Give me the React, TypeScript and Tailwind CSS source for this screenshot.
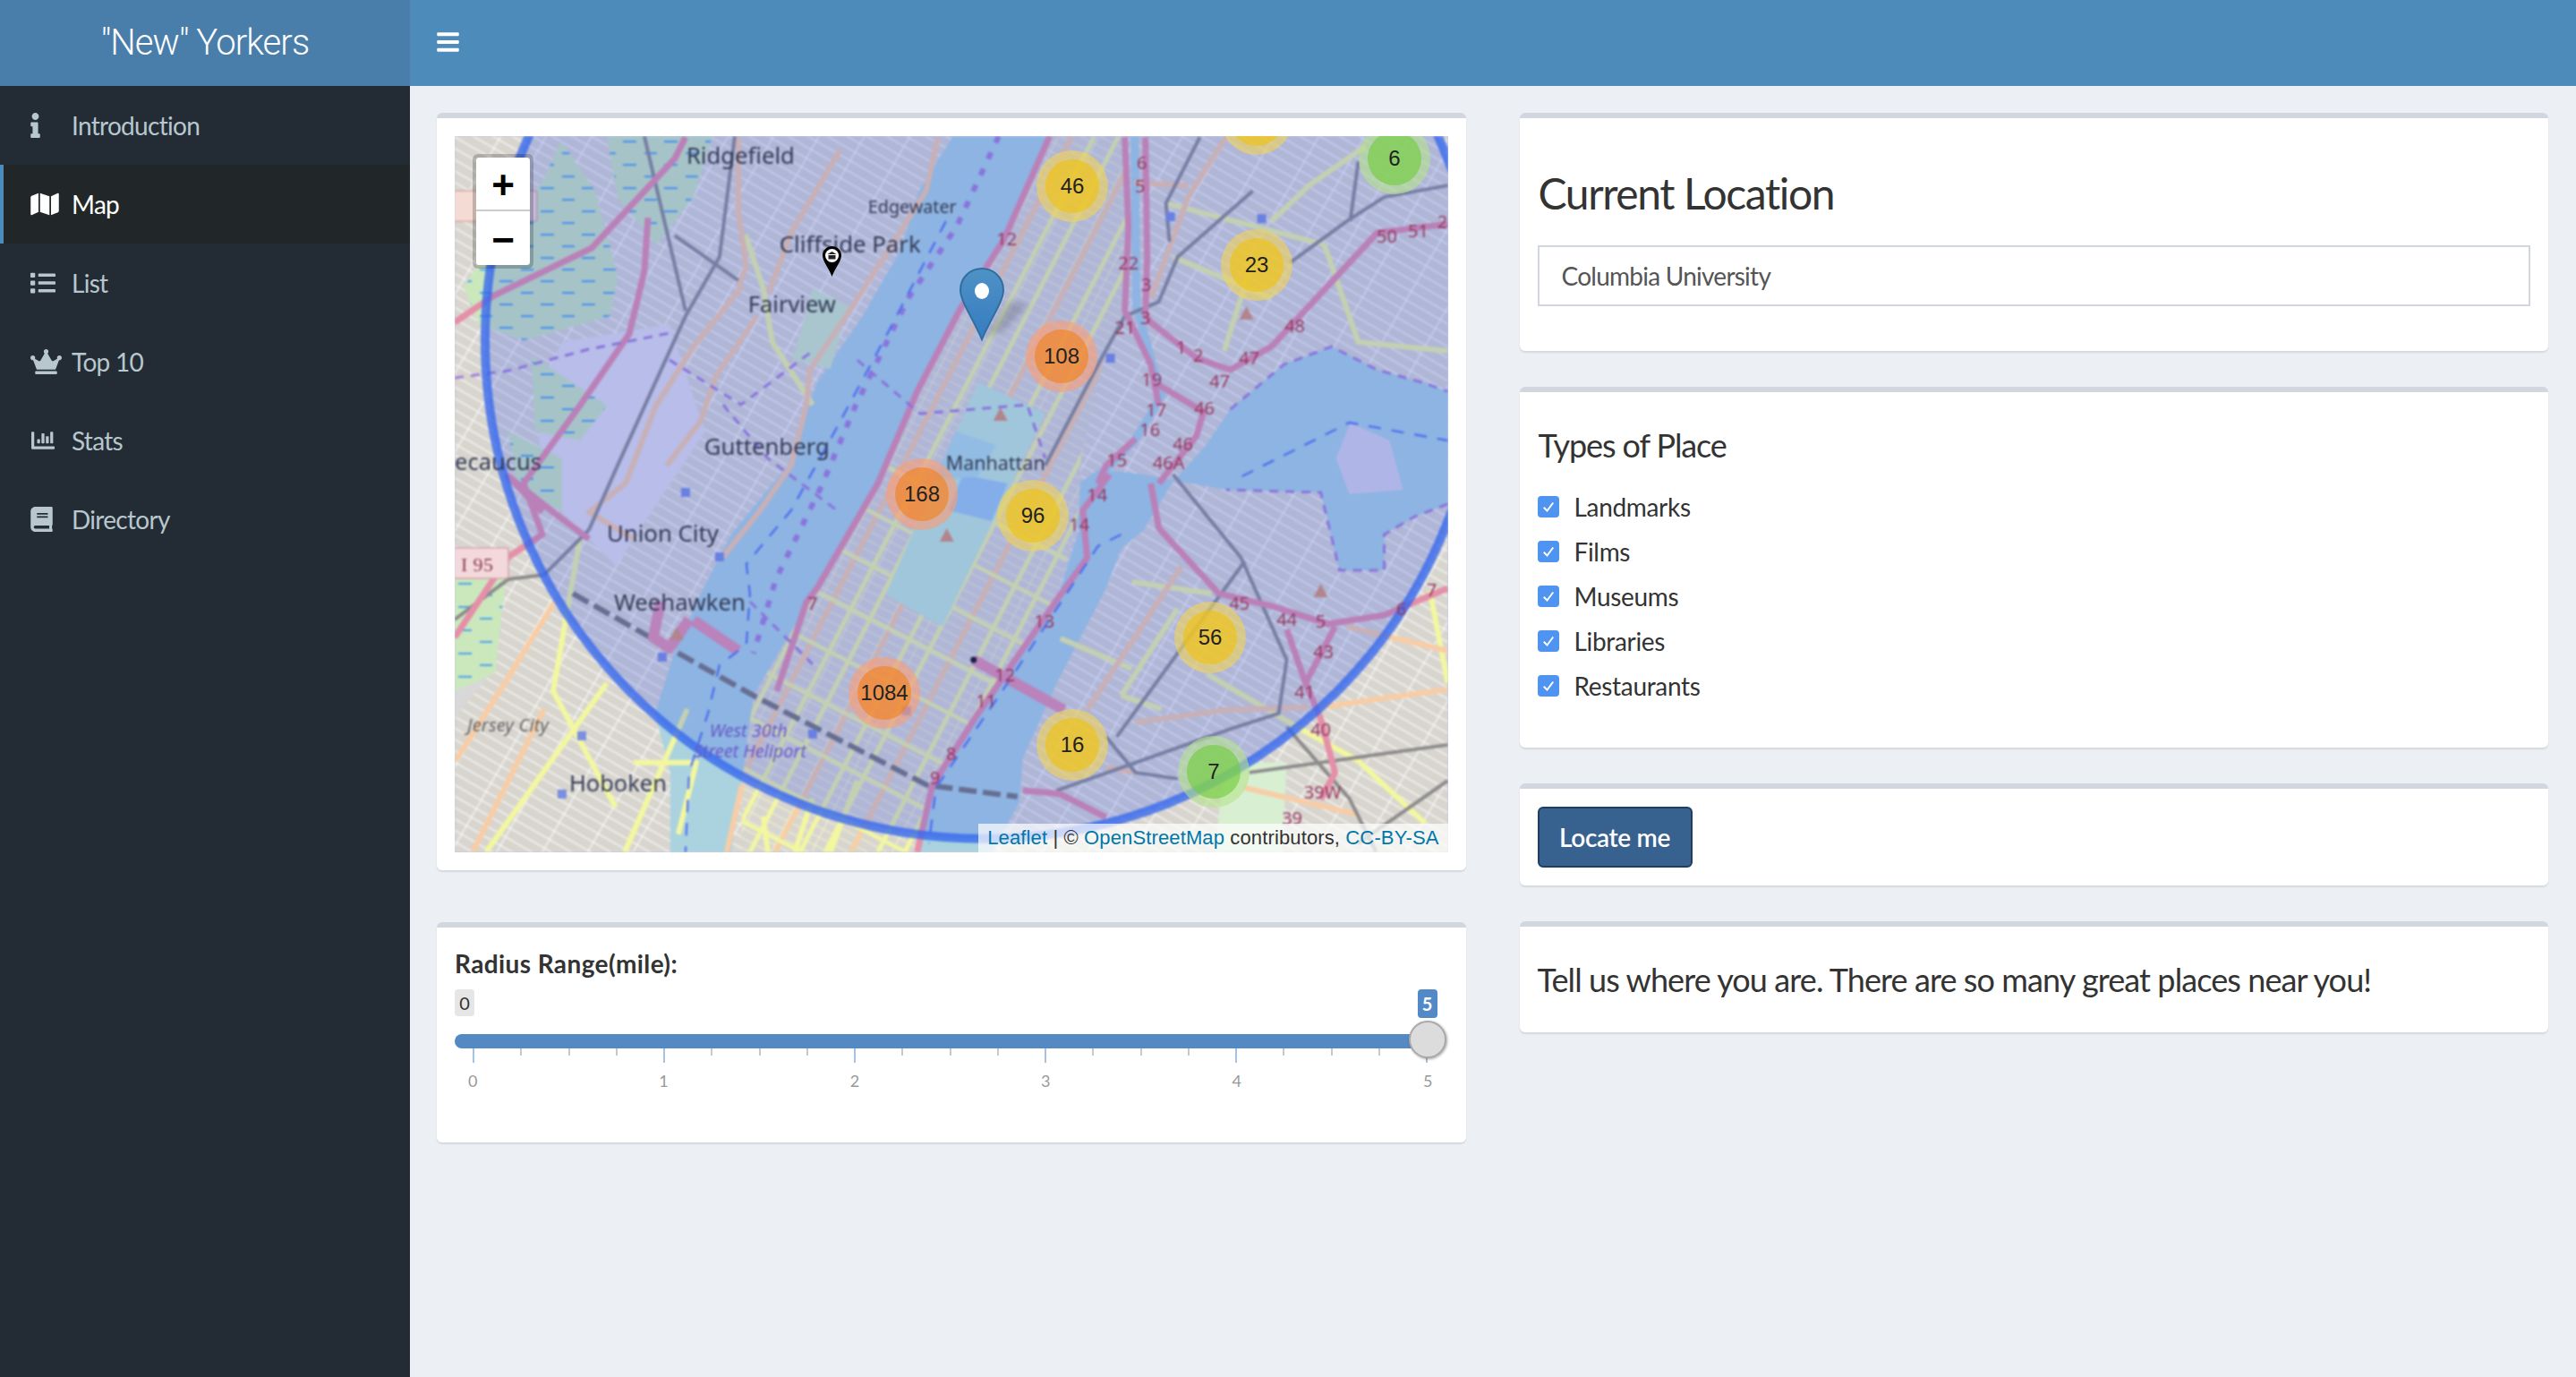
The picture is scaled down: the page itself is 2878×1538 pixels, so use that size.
import React from 'react';
import { FaInfo, FaMap, FaList, FaCrown, FaChartBar, FaBook, FaBars } from 'react-icons/fa';

const nav = [
  { label: 'Introduction', icon: <FaInfo className="w-[11px] h-[28px]" />, text: 'text-[#b8c7ce]' },
  { label: 'Map', icon: <FaMap className="w-[32px] h-[28px]" />, active: true },
  { label: 'List', icon: <FaList className="w-[28px] h-[28px]" /> },
  { label: 'Top 10', icon: <FaCrown className="w-[35px] h-[30px]" /> },
  { label: 'Stats', icon: <FaChartBar className="w-[28px] h-[26px]" /> },
  { label: 'Directory', icon: <FaBook className="w-[25px] h-[28px]" /> },
];

const places = ['Landmarks', 'Films', 'Museums', 'Libraries', 'Restaurants'];

const clusters = [
  { n: '', pos: 'left-[856px] top-[-59px]', outer: 'bg-[#f1d357]/60', inner: 'bg-[#f0c20c]/60' },
  { n: '46', pos: 'left-[650px] top-[16px]', outer: 'bg-[#f1d357]/60', inner: 'bg-[#f0c20c]/60' },
  { n: '6', pos: 'left-[1010px] top-[-15px]', outer: 'bg-[#b5e28c]/60', inner: 'bg-[#6ecc39]/60' },
  { n: '23', pos: 'left-[856px] top-[104px]', outer: 'bg-[#f1d357]/60', inner: 'bg-[#f0c20c]/60' },
  { n: '108', pos: 'left-[638px] top-[206px]', outer: 'bg-[#fd9c73]/60', inner: 'bg-[#f18017]/60' },
  { n: '168', pos: 'left-[482px] top-[360px]', outer: 'bg-[#fd9c73]/60', inner: 'bg-[#f18017]/60' },
  { n: '96', pos: 'left-[606px] top-[384px]', outer: 'bg-[#f1d357]/60', inner: 'bg-[#f0c20c]/60' },
  { n: '56', pos: 'left-[804px] top-[520px]', outer: 'bg-[#f1d357]/60', inner: 'bg-[#f0c20c]/60' },
  { n: '1084', pos: 'left-[440px] top-[582px]', outer: 'bg-[#fd9c73]/60', inner: 'bg-[#f18017]/60' },
  { n: '16', pos: 'left-[650px] top-[640px]', outer: 'bg-[#f1d357]/60', inner: 'bg-[#f0c20c]/60' },
  { n: '7', pos: 'left-[808px] top-[670px]', outer: 'bg-[#b5e28c]/60', inner: 'bg-[#6ecc39]/60' },
];

const motorways = [
  '258,1 246,25 153,125 44,178 0,208',
  '216,91 212,151 195,221 140,301 77,388 98,445 60,470 0,560',
  '665,0 614,115 564,195 517,285 473,388 405,505 393,521 360,620',
  '749,1 753,101 749,195 778,255 787,301',
  '772,1 774,135 772,200 778,208 829,248 867,261 913,235 1031,108 1110,98',
  '787,278 837,308 829,335 787,388',
  '761,338 728,368 719,388',
  '732,378 702,418 707,471 673,518 585,645 534,725 517,800',
  '778,388 787,438 854,511 913,525 976,545 1039,535 1110,505',
  '930,551 951,611 984,548',
  '951,611 968,651 984,711 968,741',
  '635,731 677,735 728,761',
  '98,420 60,380 110,420 150,450',
];
const thickMotorways = ['267,541 317,575', '580,585 681,641', '230,520 222,560 240,572 262,540'];
const rails = [
  '212,0 258,195', '313,0 296,135 258,201 182,368 150,440', '246,111 317,161',
  '883,475 740,671', '803,378 879,471 930,585 921,645 871,661 673,731',
  '1110,680 888,711', '728,671 761,711 808,718', '1110,55 1039,68 997,95 934,141', '1010,28 1001,95',
  '892,61 808,135 787,185 749,201 723,248 660,368', '833,1 795,75 799,118',
  '0,540 60,495 100,490 150,440', '930,660 1000,740 1030,800', '1110,720 1010,790',
];
const railsDashed = ['132,511 334,625 528,725 629,738'];
const primaries = [
  '321,168 267,235 225,301 191,388 150,420 200,450', '431,15 376,108 351,175', '317,1 317,85 326,145 317,168',
  '540,1 527,61 448,185 397,261 393,301 376,368 340,420 300,470', '338,201 292,268 275,318 237,368',
  '812,481 707,641', '761,655 862,641 955,638', '728,705 761,711', '862,1 820,68 778,181',
  '1110,575 997,548', '1110,618 968,638', '883,728 1010,758', '111,521 56,611 1,698', '321,725 304,800',
  '100,640 60,720 20,800', '760,52 820,55',
];
const secondaries = [
  '795,75 972,121', '913,95 955,55 1018,11', '803,135 913,181', '757,498 846,511', '677,561 757,595',
  '745,625 808,528', '841,601 938,658 1010,698 1085,768', '1090,508 1110,611', '170,611 35,800', '260,640 190,800',
  '140,450 110,620 180,750', '345,760 350,800', '400,740 380,800', '450,720 420,800', '325,110 345,170 355,230 400,300',
  '890,145 860,240', '972,121 1010,230 1110,240', '200,700 270,700 250,780', '790,640 745,625',
];
const borders = [
  '608,0 561,101 507,181 448,301 410,391 359,495 334,578',
  '867,305 927,255 980,235 1031,261 1081,275 1110,285',
  '1110,411 1073,425 1039,445 1039,485 989,485 968,398 862,395',
  '0,270 60,262 150,238 240,220',
  '300,300 350,360 430,420',
  '330,520 400,590', '240,250 320,300 400,240',
  '450,250 520,310 640,300 660,360',
];
const ships = [
  '549,95 485,218 422,335 376,418 326,478 330,511 326,568 296,591 283,645 262,711 258,800',
  '745,445 719,458 618,611 538,728 530,790',
  '880,380 1000,320 1110,340',
];
const exits: [string, number, number][] = [
  ['12', 617, 114], ['6', 768, 29], ['5', 766, 55], ['22', 753, 141], ['3', 773, 165], ['3', 772, 202], ['21', 749, 213],
  ['1', 812, 235], ['2', 831, 244], ['47', 888, 247], ['47', 855, 273], ['48', 939, 211], ['19', 779, 271], ['17', 784, 305],
  ['16', 777, 327], ['46', 838, 303], ['46', 814, 343], ['46A', 798, 364], ['15', 740, 361], ['50', 1042, 111], ['51', 1077, 105],
  ['2', 1104, 95], ['14', 718, 400], ['14', 698, 433], ['13', 659, 541], ['45', 877, 521], ['44', 930, 539], ['5', 968, 541],
  ['43', 971, 575], ['41', 950, 620], ['40', 968, 662], ['39W', 970, 732], ['39', 936, 761], ['7', 1092, 506], ['6', 1058, 527],
  ['12', 615, 601], ['11', 594, 630], ['8', 555, 689], ['9', 537, 716], ['7', 400, 521],
];
const towns: [string, number, number, number, number][] = [
  ['Ridgefield', 259, 31, 121, 26], ['Edgewater', 462, 86, 99, 20], ['Cliffside Park', 363, 130, 158, 26],
  ['Fairview', 328, 197, 98, 26], ['Guttenberg', 279, 356, 140, 26], ['ecaucus', 0, 373, 97, 26],
  ['Manhattan', 549, 373, 111, 22], ['Union City', 170, 453, 125, 26], ['Weehawken', 178, 530, 147, 26], ['Hoboken', 128, 732, 109, 26],
];
const peaks = [[885, 198], [610, 311], [550, 446], [248, 556], [968, 508]];
const stations = [[800, 90], [902, 92], [733, 248], [258, 398], [296, 470], [232, 582], [142, 670], [120, 735], [400, 668], [505, 642]];

function MapTiles() {
  const avenues = [665, 690, 715, 742, 770, 798, 826, 855, 885, 915, 945];
  const cross = [-300, -240, -180, -120, -60, 0, 60, 120, 180, 240, 300, 360, 420];
  return (
    <svg viewBox="0 0 1110 800" className="block w-full h-full blur-[0.8px]">
      <defs>
        <pattern id="blocks" width="44" height="11" patternUnits="userSpaceOnUse" patternTransform="rotate(30)">
          <rect width="44" height="11" fill="#d8d5ce" />
          <path d="M0 0H44M0 0V11" stroke="#fafafa" strokeWidth="2.4" />
        </pattern>
        <pattern id="mblocks" width="40" height="10" patternUnits="userSpaceOnUse" patternTransform="rotate(27.2)">
          <rect width="40" height="10" fill="#d8d5d0" />
          <path d="M0 0H40M0 0V10" stroke="#f2f6c8" strokeWidth="2" />
        </pattern>
        <pattern id="marsh" width="46" height="26" patternUnits="userSpaceOnUse">
          <rect width="46" height="26" fill="#cbe8bc" />
          <path d="M4 6H19M28 19H42" stroke="#4aa0f0" strokeWidth="2.2" />
        </pattern>
        <clipPath id="manhattan">
          <polygon points="665,0 749,0 755,100 749,195 725,250 700,360 698,418 673,518 585,645 534,725 517,800 320,800 322,715 334,625 405,505 473,388 517,285 564,195 614,115" />
        </clipPath>
      </defs>

      <rect width="1110" height="800" fill="url(#blocks)" />
      <polygon points="120,230 240,210 280,330 180,480 100,400 90,290" fill="#e2dfe8" />
      <polygon points="0,500 60,480 40,600 0,650" fill="#d8d8d8" />

      {/* water */}
      <path
        d="M557 0 L665 0 L614 115 L564 195 L517 285 L473 388 L405 505 L334 625 L322 715 L309 800 L241 800 L241 711 L224 645 L245 578 L275 511 L309 445 L372 368 L405 275 L456 201 L498 128 L519 61 Z"
        fill="#aad3df"
      />
      <path
        d="M682 400 L720 372 L770 378 L862 395 L968 398 L989 485 L1039 485 L1039 445 L1073 425 L1110 411 L1110 285 L1081 275 L1031 261 L980 235 L927 255 L867 305 L840 345 L800 390 L770 440 L745 461 L728 505 L673 611 L635 695 L631 745 L600 800 L517 800 L534 725 L585 645 L673 518 L698 440 Z"
        fill="#aad3df"
      />
      <polygon points="1001,320 1045,340 1060,395 1000,400 985,360" fill="#d8d4e6" />
      <polyline points="760,0 762,190 790,290 760,340 720,380" fill="none" stroke="#aad3df" strokeWidth="9" />

      {/* manhattan */}
      <g clipPath="url(#manhattan)">
        <rect width="1110" height="800" fill="url(#mblocks)" />
        {avenues.map((x, i) => (
          <line key={x} x1={x} y1={0} x2={x - 412} y2={800} stroke={i % 3 === 1 ? '#f6cfa6' : '#f2f7a0'} strokeWidth={i % 3 === 1 ? 6 : 5} />
        ))}
        {cross.map((y) => (
          <line key={y} x1={0} y1={y + 420} x2={1110} y2={y + 420 + 572} stroke="#f2f7a0" strokeWidth="4.5" />
        ))}
      </g>

      {/* parks */}
      <polygon points="585,275 660,310 545,548 482,512" fill="#c3ead6" />
      <polygon points="568,378 618,388 600,430 552,418" fill="#9ecbe8" />
      <polygon points="560,330 605,345 585,380 535,385" fill="#b0dde0" />
      <polygon points="400,170 440,190 420,260 378,250" fill="#cfeac5" />
      <polygon points="170,0 288,0 267,68 225,121 182,68" fill="url(#marsh)" />
      <polygon points="119,5 157,61 182,155 174,201 77,228 27,211 10,168 56,101 98,51" fill="url(#marsh)" />
      <polygon points="86,245 170,301 140,340 90,330" fill="url(#marsh)" />
      <polygon points="60,330 120,360 120,420 70,390" fill="url(#marsh)" />
      <polygon points="0,470 60,470 45,600 0,620" fill="url(#marsh)" />
      <polygon points="860,700 930,700 925,800 850,800" fill="#d8efd2" />

      {/* roads */}
      {secondaries.map((p) => <polyline key={p} points={p} fill="none" stroke="#f2f7a0" strokeWidth="6" strokeLinejoin="round" />)}
      {primaries.map((p) => <polyline key={p} points={p} fill="none" stroke="#f8cda6" strokeWidth="6" strokeLinejoin="round" />)}
      {rails.map((p) => <polyline key={p} points={p} fill="none" stroke="#8c8c8c" strokeWidth="4" strokeLinejoin="round" />)}
      {railsDashed.map((p) => <polyline key={p} points={p} fill="none" stroke="#777" strokeWidth="6" strokeDasharray="20 7" />)}
      {motorways.map((p) => <polyline key={p} points={p} fill="none" stroke="#e58fa8" strokeWidth="7" strokeLinejoin="round" />)}
      {thickMotorways.map((p) => <polyline key={p} points={p} fill="none" stroke="#e592ac" strokeWidth="12" strokeLinejoin="round" />)}

      {/* boundaries */}
      {borders.map((p, i) => <polyline key={p} points={p} fill="none" stroke="#a47fd8" strokeWidth={i === 0 ? 6 : 3} strokeDasharray={i === 0 ? '8 12' : '10 8'} />)}
      {ships.map((p) => <polyline key={p} points={p} fill="none" stroke="#5a78ee" strokeWidth="2.4" strokeDasharray="14 12" />)}
      {stations.map(([x, y]) => <rect key={`${x}-${y}`} x={x - 5} y={y - 5} width="10" height="10" fill="#7b8fe0" />)}
      {peaks.map(([x, y]) => <polygon key={x} points={`${x},${y - 8} ${x + 8},${y + 7} ${x - 8},${y + 7}`} fill="#d9956f" />)}
      <circle cx="580" cy="585" r="3.5" fill="#111" />

      {/* shields */}
      <rect x="-4" y="61" width="96" height="34" rx="3" fill="#f4dcd4" stroke="#d9a9a0" strokeWidth="1.5" />
      <rect x="-4" y="460" width="64" height="34" rx="3" fill="#f3d9dc" stroke="#d6a4ac" strokeWidth="1.5" />
      <text x="7" y="486" fill="#8a3a4a" fontSize="22" fontFamily="Liberation Serif, serif" textLength="36">I 95</text>

      {/* circle radius overlay */}
      <circle cx="591" cy="228" r="557" fill="#3355ee" fillOpacity="0.24" stroke="#3366ee" strokeOpacity="0.78" strokeWidth="10" />

      {towns.map(([t, x, y, w, s]) => (
        <text key={t} x={x} y={y} fontSize={s} textLength={w} lengthAdjust="spacingAndGlyphs" fill="#333a55" fontFamily="Noto Sans, sans-serif">{t}</text>
      ))}
      <text x="14" y="665" fontSize="20" textLength="91" fontStyle="italic" fill="#666" fontFamily="Noto Sans, sans-serif">Jersey City</text>
      <text x="285" y="671" fontSize="20" textLength="87" fontStyle="italic" fill="#6659c8" fontFamily="Noto Sans, sans-serif">West 30th</text>
      <text x="267" y="694" fontSize="20" textLength="126" fontStyle="italic" fill="#6659c8" fontFamily="Noto Sans, sans-serif">Street Heliport</text>
      {exits.map(([t, x, y]) => (
        <text key={`${t}-${x}`} x={x} y={y + 8} fontSize="20" textAnchor="middle" fill="#95375f" fontFamily="Noto Sans, sans-serif">{t}</text>
      ))}
    </svg>
  );
}

function MapPanel() {
  return (
    <div className="relative w-full h-[800px] overflow-hidden bg-[#c5cdeb] tracking-normal font-['Liberation_Sans',sans-serif]">
      <MapTiles />

      {clusters.map((c) => (
        <div key={c.pos} className={`absolute w-[80px] h-[80px] rounded-full flex items-center justify-center ${c.pos} ${c.outer}`}>
          <div className={`w-[60px] h-[60px] rounded-full flex items-center justify-center text-[24px] text-[#222] ${c.inner}`}>{c.n}</div>
        </div>
      ))}

      {/* small museum marker */}
      <svg viewBox="0 0 21 34" className="absolute left-[411px] top-[123px] w-[21px] h-[34px]">
        <path d="M10.5 0C4.7 0 0 4.5 0 10.2 0 17 7 24 10.5 34 14 24 21 17 21 10.2 21 4.5 16.3 0 10.5 0Z" fill="#000" />
        <circle cx="10.5" cy="10.5" r="7.5" fill="#fff" />
        <path d="M5.5 9 10.5 6 15.5 9ZM6.5 10H14.5V14.500H6.5Z" fill="#222" />
      </svg>

      {/* location pin */}
      <svg viewBox="0 0 90 84" className="absolute left-[563px] top-[146px] w-[90px] h-[84px]">
        <defs>
          <linearGradient id="pin" x1="0" y1="0" x2="0" y2="1">
            <stop offset="0" stopColor="#4f92c6" />
            <stop offset="1" stopColor="#357bc0" />
          </linearGradient>
        </defs>
        <polygon points="30,78 58,38 78,42 50,72" fill="#334" fillOpacity="0.22" className="blur-[3px]" />
        <path d="M26 2C13 2 2 12 2 26 2 38 15 56 26 81 37 56 50 38 50 26 50 12 39 2 26 2Z" fill="url(#pin)" stroke="#2f6f9f" strokeWidth="2" />
        <ellipse cx="26" cy="27" rx="8" ry="9" fill="#fff" />
      </svg>

      {/* zoom control */}
      <div className="absolute left-[20px] top-[20px] border-4 border-black/20 rounded-[6px] bg-clip-padding">
        <div className="w-[60px] h-[60px] pt-[4px] bg-white rounded-t-[4px] border-b-2 border-[#ccc] flex items-center justify-center text-[44px] font-bold text-black leading-none">+</div>
        <div className="w-[60px] h-[60px] pt-[4px] bg-white rounded-b-[4px] flex items-center justify-center text-[44px] font-bold text-black leading-none">−</div>
      </div>

      {/* attribution */}
      <div className="absolute right-0 bottom-0 h-[32px] pl-[10px] pr-[10px] bg-white/70 text-[22px] leading-[32px] tracking-[0.13px] text-[#333] whitespace-nowrap">
        <span className="text-[#0078a8]">Leaflet</span> | © <span className="text-[#0078a8]">OpenStreetMap</span> contributors, <span className="text-[#0078a8]">CC-BY-SA</span>
      </div>
    </div>
  );
}

function Card({ className, children }: { className?: string; children: React.ReactNode }) {
  return <div className={`bg-white border-t-[6px] border-[#d2d6de] rounded-[6px] shadow-[0_2px_2px_rgba(0,0,0,0.1)] ${className ?? ''}`}>{children}</div>;
}

function RangeSlider() {
  const ticks = Array.from({ length: 21 }, (_, i) => i);
  return (
    <div>
      <div className="h-[34px] leading-[34px] text-[28px] font-bold tracking-[0.4px] text-[#333]">Radius Range(mile):</div>
      <div className="mt-[12px] flex justify-between items-start pr-[12px]">
        <span className="w-[22px] h-[30px] rounded-[4px] bg-[#e6e6e6] text-[#333] text-[20px] leading-[30px] text-center">0</span>
        <span className="w-[22px] h-[32px] rounded-[4px] bg-[#5289c6] text-white font-bold text-[20px] leading-[32px] text-center">5</span>
      </div>
      <div className="relative mt-[18px] w-[1087px] h-[16px] rounded-l-[8px] bg-[#5489c4]">
        <div className="absolute right-[-21px] top-[-15px] w-[42px] h-[42px] rounded-full bg-[#dcdcdc] border-2 border-[#aaaaaa] shadow-[1px_1px_3px_rgba(0,0,0,0.35)]" />
      </div>
      <div className="ml-[20px] w-[1067px] flex justify-between items-start">
        {ticks.map((i) =>
          i % 4 === 0 ? <div key={i} className="w-[2px] h-[16px] bg-[#a5c3e2]" /> : <div key={i} className="w-[2px] h-[8px] bg-[#c8c8c8]" />
        )}
      </div>
      <div className="mt-[8px] ml-[20px] w-[1067px] flex justify-between text-[18px] leading-[24px] text-[#999]">
        {[0, 1, 2, 3, 4, 5].map((n) => (
          <span key={n} className="w-0 flex justify-center">{n}</span>
        ))}
      </div>
    </div>
  );
}

export default function App() {
  return (
    <div className="w-[2878px] h-[1538px] overflow-hidden flex flex-col bg-[#ecf0f5] font-[Lato,sans-serif] tracking-[-0.02em] text-[#333]">
      <header className="h-[96px] flex shrink-0 bg-[#4c8bba]">
        <div className="w-[458px] flex items-center justify-center bg-[#4a7eaa] text-white text-[40px] tracking-[-0.9px] font-[Roboto,sans-serif] font-light">"New" Yorkers</div>
        <div className="pl-[30px] pb-[2px] flex items-center text-white">
          <FaBars className="w-[25px] h-[28px]" />
        </div>
      </header>

      <div className="flex-1 flex">
        <aside className="w-[458px] bg-[#232c34]">
          {nav.map((item) => (
            <div
              key={item.label}
              className={`h-[88px] flex items-center text-[28px] tracking-[-0.7px] ${item.active ? 'bg-[#212728] border-l-[4px] border-[#4c8bba] text-white' : 'text-[#b8c7ce]'}`}
            >
              <span className={`w-[46px] flex items-center ${item.active ? 'ml-[30px]' : 'ml-[34px]'}`}>{item.icon}</span>
              <span>{item.label}</span>
            </div>
          ))}
        </aside>

        <main className="flex-1 flex gap-[60px] pl-[30px] pr-[31px] pt-[30px]">
          <div className="flex-1 flex flex-col gap-[58px]">
            <Card className="px-[20px] pt-[20px] pb-[20px]">
              <MapPanel />
            </Card>
            <Card className="px-[20px] pt-[23px] pb-[57px]">
              <RangeSlider />
            </Card>
          </div>

          <div className="flex-1 flex flex-col gap-[40px]">
            <Card className="px-[20px] pt-[52px] pb-[50px]">
              <h3 className="ml-[1px] text-[48px] leading-[64px] tracking-[-1.4px] text-[#333]">Current Location</h3>
              <div className="mt-[26px] h-[68px] border-2 border-[#d2d6de] pl-[25px] flex items-center text-[28px] tracking-[-0.75px] text-[#555]">Columbia University</div>
            </Card>

            <Card className="px-[20px] pt-[34px] h-[403px]">
              <h4 className="ml-[1px] text-[36px] leading-[50px] tracking-[-1.1px] text-[#333]">Types of Place</h4>
              <div className="mt-[19px] flex flex-col">
                {places.map((p) => (
                  <div key={p} className="h-[50px] flex items-center gap-[17px] text-[28px] text-[#333]">
                    <span className="w-[24px] h-[24px] rounded-[4px] bg-[#4f94f0] flex items-center justify-center">
                      <svg viewBox="0 0 24 24" className="w-[18px] h-[18px]" fill="none" stroke="#fff" strokeWidth="2.6">
                        <path d="M5 13l5 5 9-12" />
                      </svg>
                    </span>
                    {p}
                  </div>
                ))}
              </div>
            </Card>

            <Card className="px-[20px] pt-[20px] pb-[20px]">
              <button className="block w-[173px] h-[68px] rounded-[6px] border-2 border-[#1f3f5f] bg-[#37628f] text-white text-[28px] font-semibold">Locate me</button>
            </Card>

            <Card className="px-[20px] h-[124px] flex items-center">
              <p className="text-[36px] tracking-[-0.9px] text-[#333]">Tell us where you are. There are so many great places near you!</p>
            </Card>
          </div>
        </main>
      </div>
    </div>
  );
}
